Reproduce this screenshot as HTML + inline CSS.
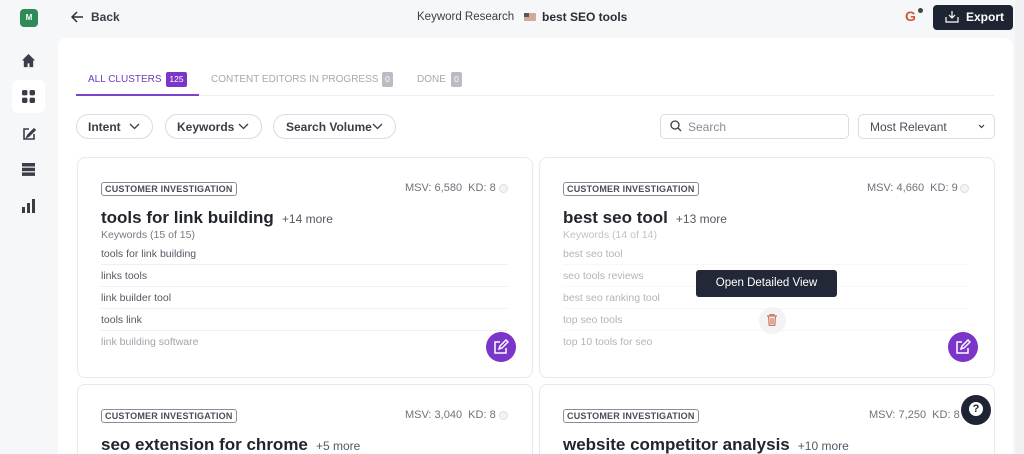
<!DOCTYPE html>
<html style="width:1024px;height:454px;overflow:hidden"><head><meta charset="utf-8"><style>
*{margin:0;padding:0;box-sizing:border-box}
body{width:1024px;height:454px;overflow:hidden;background:#f6f7f9;font-family:"Liberation Sans",sans-serif;color:#2a2d36;position:relative}
.a{position:absolute}
.main{left:58px;top:38px;width:955px;height:416px;background:#fff;border-radius:8px 8px 0 0}
.sb{left:1015px;top:0;width:9px;height:454px;background:#f0f0f2}
.pill{height:25px;border:1px solid #dadce3;border-radius:13px;font-size:12px;font-weight:bold;color:#3a3d48;display:flex;align-items:center;justify-content:space-between;padding:0 12px 0 11px;white-space:nowrap}
.card{background:#fff;border:1px solid #e8e9ee;border-radius:8px}
.tag{font-size:9px;font-weight:bold;color:#4a4d57;border:1px solid #8a8d96;border-radius:3px;padding:1px 3px;letter-spacing:.2px}
.msv{font-size:11px;color:#6f727b}
.ttl{font-size:17px;font-weight:bold;color:#22252e;white-space:nowrap}
.more{font-size:12px;color:#555862;font-weight:normal}
.kw{font-size:10.5px;color:#777a83}
.li{font-size:10.5px;color:#555862;width:406px;height:22px;border-bottom:1px solid #eeeff2;line-height:22px}
.edit{width:30px;height:30px;border-radius:50%;background:#7b35c9}
.dot{width:9px;height:9px;border-radius:50%;border:1px solid #dcdde2;background:#f4f4f6}
.tab{font-size:10px;white-space:nowrap}
.bd{height:15px;border-radius:2px;color:#fff;font-size:8.5px;text-align:center;line-height:15px}
</style></head><body>
<div class="a sb"></div>
<div class="a main"></div>
<!-- sidebar -->
<div class="a" style="left:20px;top:9px;width:18px;height:18px;background:#2e8a57;border-radius:4px;color:#fff;font-size:8px;font-weight:bold;text-align:center;line-height:18px">M</div>
<svg class="a" style="left:21px;top:53px" width="15" height="15" viewBox="0 0 16 16"><path d="M8 1L1 8h2v7h4v-4h2v4h4V8h2z" fill="#3a3d48"/></svg>
<div class="a" style="left:12px;top:80px;width:33px;height:33px;background:#fff;border-radius:6px"></div>
<svg class="a" style="left:22px;top:90px" width="13" height="13" viewBox="0 0 12 12" fill="#3a3d48"><rect x="0" y="0" width="5" height="5" rx="1.5"/><rect x="7" y="0" width="5" height="5" rx="1.5"/><rect x="0" y="7" width="5" height="5" rx="1.5"/><rect x="7" y="7" width="5" height="5" rx="1.5"/></svg>
<svg class="a" style="left:21px;top:126px" width="16" height="16" viewBox="0 0 16 16" fill="none" stroke="#3a3d48" stroke-width="1.6"><path d="M8 3H3v10h10V8"/><path d="M6 11l2-1 6-6-1-1-6 6z" fill="#3a3d48"/></svg>
<svg class="a" style="left:22px;top:163px" width="13" height="13" viewBox="0 0 13 13" fill="#3a3d48"><rect y="0" width="13" height="3.5"/><rect y="4.7" width="13" height="3.5"/><rect y="9.4" width="13" height="3.5"/></svg>
<svg class="a" style="left:22px;top:199px" width="14" height="14" viewBox="0 0 14 14" fill="#3a3d48"><rect x="0" y="8" width="3" height="6"/><rect x="5" y="4" width="3" height="10"/><rect x="10" y="0" width="3" height="14"/></svg>
<!-- header -->
<svg class="a" style="left:71px;top:11px" width="13" height="12" viewBox="0 0 13 12" fill="none" stroke="#2a2d36" stroke-width="1.5"><path d="M12 6H1M6 1L1 6l5 5"/></svg>
<div class="a" style="left:91px;top:10px;font-size:12px;font-weight:bold;color:#3a3d48">Back</div>
<div class="a" style="left:417px;top:11px;font-size:11.5px;color:#3a3d48">Keyword Research</div>
<div class="a" style="left:524px;top:13px;width:12px;height:8px;background:#d4a89a;border-radius:1px"><div style="width:5px;height:4px;background:#556"></div></div>
<div class="a" style="left:542px;top:10px;font-size:12px;font-weight:bold;color:#2a2d36">best SEO tools</div>
<div class="a" style="left:905px;top:8px;font-size:14px;font-weight:bold;color:#d4553b">G</div>
<div class="a" style="left:918px;top:8px;width:5px;height:5px;border-radius:50%;background:#444"></div>
<div class="a" style="left:933px;top:5px;width:80px;height:25px;background:#1f2433;border-radius:4px;color:#fff;font-size:12px;font-weight:bold;line-height:25px;padding-left:33px">Export</div>
<svg class="a" style="left:945px;top:10px" width="14" height="13" viewBox="0 0 14 13" fill="none" stroke="#fff" stroke-width="1.2"><path d="M7 1v7M4 5l3 3 3-3M1 7v5h12V7"/></svg>
<!-- tabs -->
<div class="a tab" style="left:88px;top:74px;color:#6a3fbf">ALL CLUSTERS</div>
<div class="a bd" style="left:166px;top:72px;width:21px;background:#7b35c9">125</div>
<div class="a tab" style="left:211px;top:74px;color:#a6a8b0">CONTENT EDITORS IN PROGRESS</div>
<div class="a bd" style="left:382px;top:72px;width:11px;background:#b9bcc3">0</div>
<div class="a tab" style="left:417px;top:74px;color:#a6a8b0">DONE</div>
<div class="a bd" style="left:451px;top:72px;width:11px;background:#b9bcc3">0</div>
<div class="a" style="left:76px;top:95px;width:918px;height:1px;background:#eceef1"></div>
<div class="a" style="left:76px;top:94px;width:123px;height:2px;background:#7b45c9"></div>
<!-- filters -->
<div class="a pill" style="left:76px;top:114px;width:77px">Intent <svg width="11" height="7" viewBox="0 0 11 7" fill="none" stroke="#3a3d48" stroke-width="1.3"><path d="M1 1l4.5 4.5L10 1"/></svg></div>
<div class="a pill" style="left:165px;top:114px;width:97px">Keywords <svg width="11" height="7" viewBox="0 0 11 7" fill="none" stroke="#3a3d48" stroke-width="1.3"><path d="M1 1l4.5 4.5L10 1"/></svg></div>
<div class="a pill" style="left:273px;top:114px;width:123px;padding-left:12px">Search Volume <svg width="11" height="7" viewBox="0 0 11 7" fill="none" stroke="#3a3d48" stroke-width="1.3"><path d="M1 1l4.5 4.5L10 1"/></svg></div>
<div class="a" style="left:660px;top:114px;width:189px;height:25px;border:1px solid #dadce3;border-radius:5px"></div>
<svg class="a" style="left:670px;top:120px" width="12" height="12" viewBox="0 0 12 12" fill="none" stroke="#3a3d48" stroke-width="1.3"><circle cx="5" cy="5" r="4"/><path d="M8 8l3 3"/></svg>
<div class="a" style="left:688px;top:120px;font-size:12px;color:#8a8d96">Search</div>
<div class="a" style="left:858px;top:114px;width:137px;height:25px;border:1px solid #dadce3;border-radius:5px"></div>
<div class="a" style="left:870px;top:120px;font-size:12px;color:#4a4d57">Most Relevant</div>
<svg class="a" style="left:978px;top:124px" width="7" height="5" viewBox="0 0 7 5" fill="none" stroke="#3a3d48" stroke-width="1.2"><path d="M1 1l2.5 2.5L6 1"/></svg>
<!-- card 1 -->
<div class="a card" style="left:77px;top:157px;width:456px;height:221px"></div>
<div class="a tag" style="left:101px;top:182px">CUSTOMER INVESTIGATION</div>
<div class="a msv" style="left:405px;top:182px">MSV: 6,580&nbsp;&nbsp;KD: 8</div>
<div class="a dot" style="left:499px;top:184px"></div>
<div class="a ttl" style="left:101px;top:208px">tools for link building <span class="more">&nbsp;+14 more</span></div>
<div class="a kw" style="left:101px;top:229px">Keywords (15 of 15)</div>
<div class="a" style="left:101px;top:243px">
<div class="li">tools for link building</div><div class="li">links tools</div><div class="li">link builder tool</div><div class="li">tools link</div><div class="li" style="border:none;color:#a0a3ab">link building software</div></div>
<div class="a edit" style="left:486px;top:332px"></div>
<svg class="a" style="left:493px;top:339px" width="16" height="16" viewBox="0 0 16 16" fill="none" stroke="#fff" stroke-width="1.5"><path d="M7 3H2v11h11V9"/><path d="M6 10l1-3 6-6 2 2-6 6z"/></svg>
<!-- card 2 -->
<div class="a card" style="left:539px;top:157px;width:456px;height:221px"></div>
<div class="a tag" style="left:563px;top:182px">CUSTOMER INVESTIGATION</div>
<div class="a msv" style="left:867px;top:182px">MSV: 4,660&nbsp;&nbsp;KD: 9</div>
<div class="a dot" style="left:960px;top:184px"></div>
<div class="a ttl" style="left:563px;top:208px">best seo tool <span class="more">&nbsp;+13 more</span></div>
<div class="a kw" style="left:563px;top:229px;color:#c0c2c8">Keywords (14 of 14)</div>
<div class="a" style="left:563px;top:243px;opacity:.45">
<div class="li">best seo tool</div><div class="li">seo tools reviews</div><div class="li">best seo ranking tool</div><div class="li">top seo tools</div><div class="li" style="border:none">top 10 tools for seo</div></div>
<div class="a" style="left:696px;top:270px;width:141px;height:27px;background:#232838;border-radius:3px;color:#fff;font-size:11.5px;text-align:center;line-height:27px">Open Detailed View</div>
<div class="a" style="left:759px;top:307px;width:27px;height:27px;border-radius:50%;background:#f3f3f5"></div>
<svg class="a" style="left:767px;top:314px" width="10" height="12" viewBox="0 0 10 12" fill="none" stroke="#d07560" stroke-width="1.2"><path d="M0 2h10M3 2V0.6h4V2M1.5 2l.7 9.4h5.6L8.5 2M4 4v6M6 4v6"/></svg>
<div class="a edit" style="left:948px;top:332px"></div>
<svg class="a" style="left:955px;top:339px" width="16" height="16" viewBox="0 0 16 16" fill="none" stroke="#fff" stroke-width="1.5"><path d="M7 3H2v11h11V9"/><path d="M6 10l1-3 6-6 2 2-6 6z"/></svg>
<!-- row 2 -->
<div class="a card" style="left:77px;top:384px;width:456px;height:80px"></div>
<div class="a tag" style="left:101px;top:409px">CUSTOMER INVESTIGATION</div>
<div class="a msv" style="left:405px;top:409px">MSV: 3,040&nbsp;&nbsp;KD: 8</div>
<div class="a dot" style="left:499px;top:411px"></div>
<div class="a ttl" style="left:101px;top:435px">seo extension for chrome <span class="more">&nbsp;+5 more</span></div>
<div class="a card" style="left:539px;top:384px;width:456px;height:80px"></div>
<div class="a tag" style="left:563px;top:409px">CUSTOMER INVESTIGATION</div>
<div class="a msv" style="left:869px;top:409px">MSV: 7,250&nbsp;&nbsp;KD: 8</div>
<div class="a ttl" style="left:563px;top:435px">website competitor analysis <span class="more">&nbsp;+10 more</span></div>
<div class="a" style="left:961px;top:395px;width:30px;height:30px;border-radius:50%;background:#1f2433"></div>
<div class="a" style="left:969px;top:402px;width:14px;height:14px;border-radius:50%;background:#fff;color:#1f2433;font-size:11px;font-weight:bold;text-align:center;line-height:14px">?</div>
</body></html>
